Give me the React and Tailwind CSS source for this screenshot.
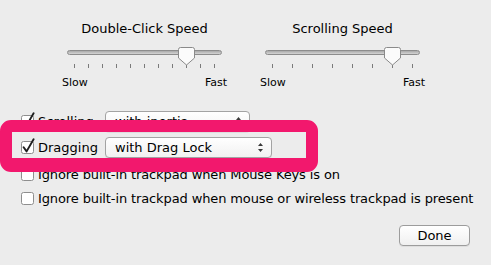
import React from "react";

const font = { fontFamily: '"Lucida Grande", "DejaVu Sans", sans-serif' };

function Slider({ title, ticks, value }) {
    // thumb position follows the selected tick
    const span = 141;
    const x = 7 + (value * span) / (ticks - 1);
    return (
        <div className="w-[165px] flex flex-col">
            <div className="text-[13px] leading-[16px] text-center text-black">{title}</div>
            <div className="relative mx-[5px] h-[19px] mt-[8px]">
                <div className="absolute left-0 right-0 top-[5px] h-[5px] rounded-full border border-[#8c8c8c] bg-gradient-to-b from-[#a9a9a9] to-[#d4d4d4]" />
                <svg className="absolute top-[2px]" style={{ left: x - 8.5 }} width="17" height="19" viewBox="0 0 17 19">
                    <path
                        d="M2.5 0.5 H14.5 Q16.5 0.5 16.5 2.5 V11 L8.5 18 L0.5 11 V2.5 Q0.5 0.5 2.5 0.5 Z"
                        fill="#fbfbfb"
                        stroke="#8a8a8a"
                    />
                </svg>
            </div>
            <div className="mx-[5px] px-[7px] h-[4px] flex justify-between">
                {Array.from({ length: ticks }).map((_, i) => (
                    <div key={i} className="w-px h-[4px] bg-[#7a7a7a]" />
                ))}
            </div>
            <div className="flex justify-between mt-[8px] text-[11px] leading-[14px] text-black">
                <span>Slow</span>
                <span>Fast</span>
            </div>
        </div>
    );
}

function CheckBox({ checked }) {
    return (
        <svg width="15" height="17" viewBox="0 0 15 17" className="shrink-0 -mt-[3px]">
            <rect x="0.5" y="3.5" width="12" height="12" rx="2" fill="#ffffff" stroke="#8e8e8e" />
            {checked && (
                <path d="M2.6 9.2 L5.6 13.4 L12.6 1.2" fill="none" stroke="#1e1e1e" strokeWidth="1.9" strokeLinecap="round" strokeLinejoin="round" />
            )}
        </svg>
    );
}

function PopUp({ label, width }) {
    return (
        <div
            className="h-[21px] flex items-center justify-between pl-[9px] pr-[7px] rounded-[4px] border border-[#a3a3a3] bg-gradient-to-b from-[#ffffff] to-[#f1f1f1] text-[13px] text-black shadow-[0_1px_0_rgba(0,0,0,0.06)]"
            style={{ width }}
        >
            <span>{label}</span>
            <svg width="7" height="11" viewBox="0 0 7 11">
                <path d="M3.5 1 L6 4 H1 Z M3.5 10 L6 7 H1 Z" fill="#3a3a3a" />
            </svg>
        </div>
    );
}

function OptionRow({ checked, label, popup, width }) {
    return (
        <div className="flex items-center h-[21px] pl-[21px]">
            <CheckBox checked={checked} />
            <span className="ml-[2px] w-[67px] text-[13px] text-black">{label}</span>
            <PopUp label={popup} width={width} />
        </div>
    );
}

function CheckRow({ label, className }) {
    return (
        <div className={"flex items-center h-[16px] pl-[21px] " + className}>
            <CheckBox checked={false} />
            <span className="ml-[2px] text-[13px] leading-[16px] tracking-[-0.12px] text-black whitespace-nowrap">{label}</span>
        </div>
    );
}

export default function App() {
    return (
        <div className="relative w-[491px] h-[265px] bg-[#ececec] overflow-hidden" style={font}>
            <div className="flex pl-[62px] gap-[33px] pt-[21px]">
                <Slider title="Double-Click Speed" ticks={11} value={8} />
                <Slider title="Scrolling Speed" ticks={8} value={6} />
            </div>

            <div className="flex flex-col mt-[21px]">
                <OptionRow checked label="Scrolling" popup="with inertia" width={145} />
                <div className="mt-[5px]">
                    <OptionRow checked label="Dragging" popup="with Drag Lock" width={167} />
                </div>
                <CheckRow className="mt-[9px]" label="Ignore built-in trackpad when Mouse Keys is on" />
                <CheckRow className="mt-[8px]" label="Ignore built-in trackpad when mouse or wireless trackpad is present" />
                <div className="flex justify-end pr-[21px] mt-[18px]">
                    <button className="w-[71px] h-[21px] rounded-[4px] border border-[#9c9c9c] bg-gradient-to-b from-[#ffffff] to-[#f0f0f0] text-[13px] leading-[19px] text-black shadow-[0_1px_0_rgba(0,0,0,0.06)]">
                        Done
                    </button>
                </div>
            </div>

            {/* pink highlight drawn over the Dragging row */}
            <div className="absolute left-0 top-[120px] w-[318px] h-[52px] border-x-[12px] border-t-[12px] border-b-[14px] border-[#f2186d] rounded-[11px]" />
        </div>
    );
}
